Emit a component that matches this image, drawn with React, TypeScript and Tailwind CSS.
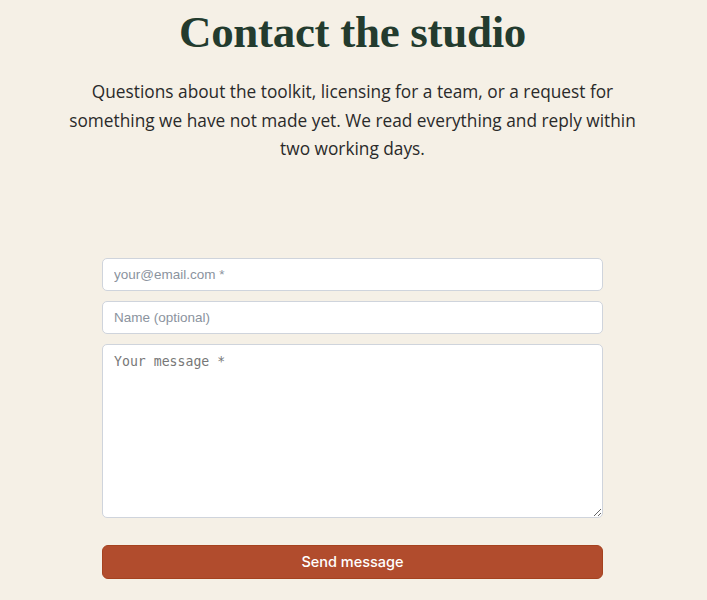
export default function App() {
  return (
    <div className="min-h-[600px] bg-[#f5f0e6] pr-[2px] pt-[6px]">
      <div className="mx-auto flex w-[600px] flex-col items-center">
        <h1 className="font-['Liberation_Serif',serif] text-[45px] font-bold leading-[52px] tracking-[-0.3px] text-[#233b2e]">
          Contact the studio
        </h1>
        <p className="mt-[20px] whitespace-nowrap text-center font-['Open_Sans',sans-serif] text-[17.3px] leading-[28.5px] text-[#2a2a2a]">
          Questions about the toolkit, licensing for a team, or a request for
          <br />
          something we have not made yet. We read everything and reply within
          <br />
          two working days.
        </p>
      </div>

      <form className="mx-auto mt-[94px] flex w-[501px] flex-col" onSubmit={(e) => e.preventDefault()}>
        <div className="flex flex-col gap-[10px]">
          <input
            type="email"
            placeholder="your@email.com *"
            className="h-[33px] rounded-[5px] border border-[#cfd4dc] bg-white px-[11px] font-['Liberation_Sans',sans-serif] text-[13.5px] text-[#222] outline-none placeholder:text-[#8b939e]"
          />
          <input
            type="text"
            placeholder="Name (optional)"
            className="h-[33px] rounded-[5px] border border-[#cfd4dc] bg-white px-[11px] font-['Liberation_Sans',sans-serif] text-[13.5px] text-[#222] outline-none placeholder:text-[#8b939e]"
          />
          <textarea
            placeholder="Your message *"
            className="h-[174px] rounded-[5px] border border-[#cfd4dc] bg-white px-[11px] py-[8px] font-['DejaVu_Sans_Mono',monospace] text-[13.2px] leading-[18px] text-[#222] outline-none placeholder:text-[#777]"
          />
        </div>
        <button
          type="submit"
          className="mt-[27px] h-[34px] rounded-[6px] border border-[#a5421f] bg-[#b14c2d] font-['Inter',sans-serif] text-[14.5px] font-medium text-white"
        >
          Send message
        </button>
      </form>
    </div>
  );
}
